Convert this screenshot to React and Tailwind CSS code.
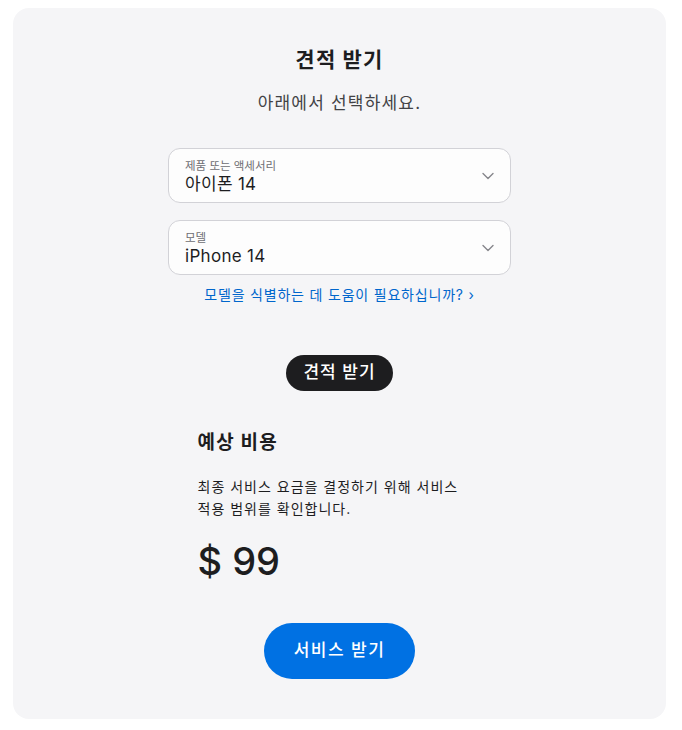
import React from "react";

const font = { fontFamily: "Inter, 'Noto Sans CJK KR', sans-serif" };

const SelectBox = ({ label, value }) => (
    <div className="w-[343px] h-[55px] rounded-[12px] border border-[#d2d2d7] bg-[#fdfdfd] flex items-center pl-4 pr-4">
        <div className="flex-1 flex flex-col pt-[2px]">
            <span className="text-[11.5px] leading-[16px] text-[#6e6e73]">{label}</span>
            <span className="text-[17px] leading-[21px] text-[#1d1d1f] tracking-[0.3px]">{value}</span>
        </div>
        <svg width="12" height="8" viewBox="0 0 12 8" className="text-[#86868b]">
            <path d="M1 1.5l5 5 5-5" fill="none" stroke="currentColor" strokeWidth="1.4" strokeLinecap="round" strokeLinejoin="round" />
        </svg>
    </div>
);

export default function App() {
    return (
        <div className="min-h-screen bg-white pt-2 px-[13px]" style={font}>
            <div className="w-[653px] h-[711px] rounded-[16px] bg-[#f5f5f7] flex flex-col items-center">
                {/* Header */}
                <h1 className="mt-[38px] text-[21px] leading-[28px] font-bold tracking-[1.2px] text-[#1d1d1f]">견적 받기</h1>
                <p className="mt-[17px] text-[17px] leading-[24px] tracking-[1.2px] text-[#424245]">아래에서 선택하세요.</p>

                {/* Selects */}
                <div className="mt-[33px] flex flex-col gap-[17px]">
                    <SelectBox label="제품 또는 액세서리" value="아이폰 14" />
                    <SelectBox label="모델" value="iPhone 14" />
                </div>
                <a className="mt-[10px] text-[14px] leading-[20px] tracking-[0.8px] text-[#0066cc]">
                    모델을 식별하는 데 도움이 필요하십니까? ›
                </a>

                <button className="mt-[50px] h-[36px] px-[17px] rounded-full bg-[#1d1d1f] text-white text-[17px] font-medium tracking-[1px]">
                    견적 받기
                </button>

                {/* Estimate */}
                <div className="mt-[39px] w-[284px]">
                    <div className="text-[19px] leading-[26px] font-bold tracking-[1.2px] text-[#1d1d1f]">예상 비용</div>
                    <p className="mt-[20px] text-[14px] leading-[22px] tracking-[1px] text-[#1d1d1f] whitespace-nowrap">
                        최종 서비스 요금을 결정하기 위해 서비스<br />적용 범위를 확인합니다.
                    </p>
                    <div className="mt-[17px] text-[38px] leading-[48px] font-medium text-[#1d1d1f]">$ 99</div>
                </div>

                <button className="mt-[38px] h-[56px] w-[151px] rounded-full bg-[#0071e3] text-white text-[17px] font-medium tracking-[1.5px]">
                    서비스 받기
                </button>
            </div>
        </div>
    );
}
